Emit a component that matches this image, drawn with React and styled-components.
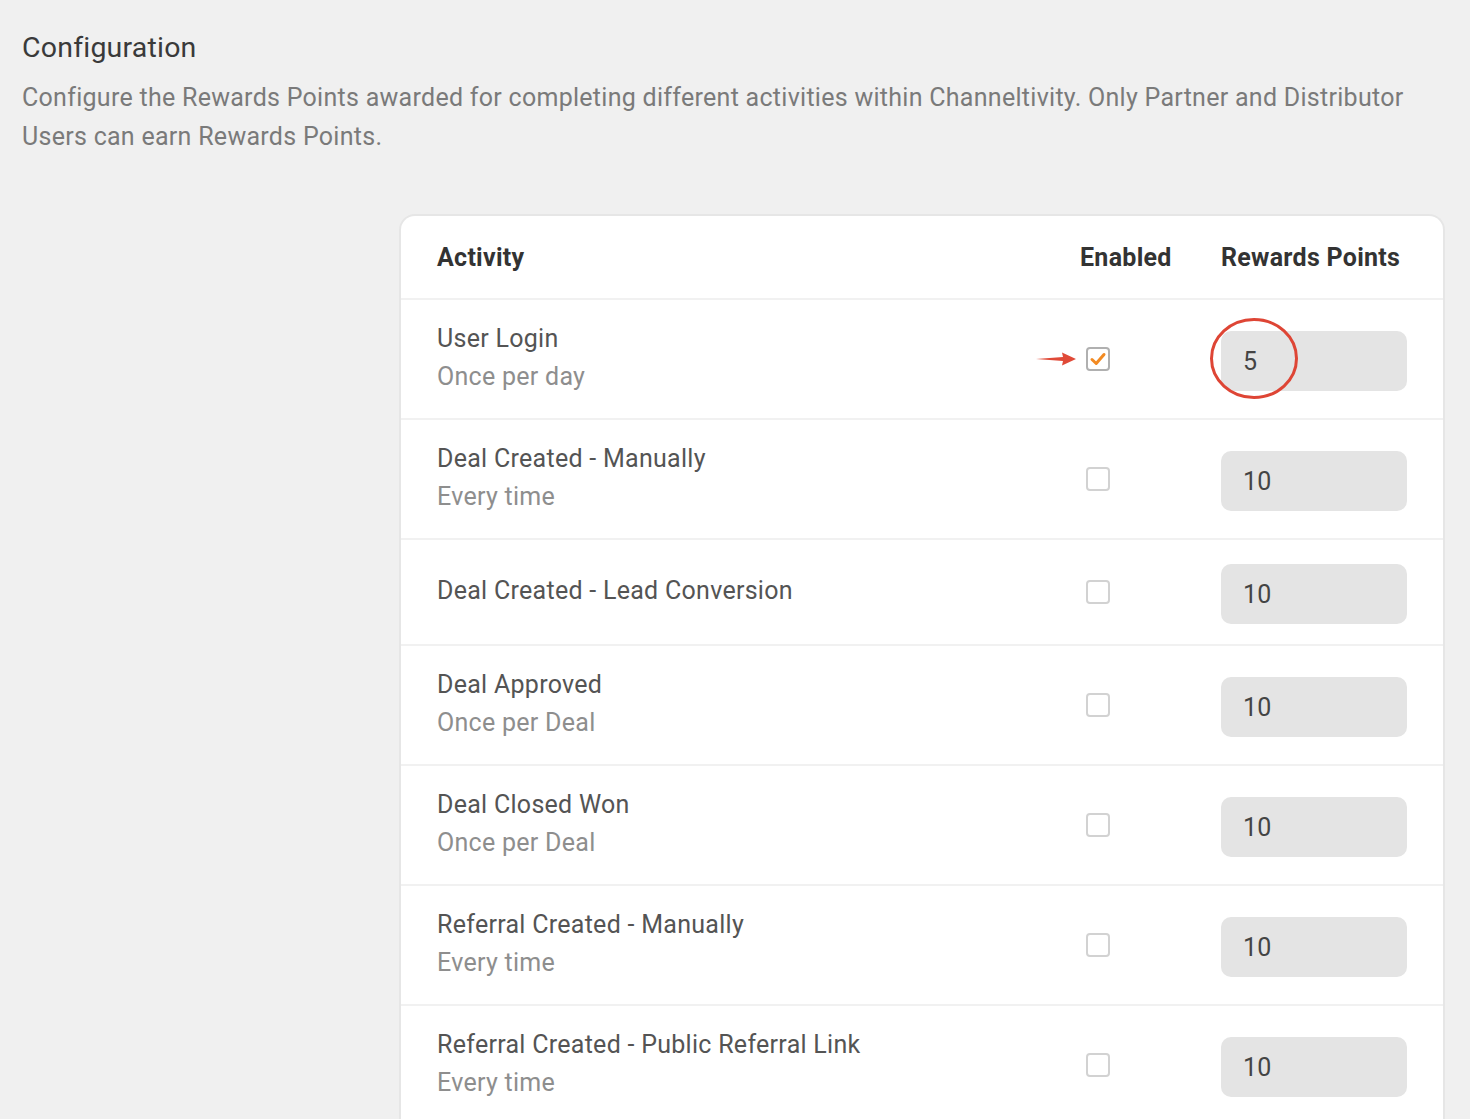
import React from 'react';
import styled, { createGlobalStyle } from 'styled-components';

const GlobalStyle = createGlobalStyle`
  html, body {
    margin: 0;
    padding: 0;
    background: #f0f0f0;
    font-family: Roboto, "Liberation Sans", sans-serif;
  }
  * { box-sizing: border-box; }
`

const Page = styled.div`
  padding: 28px 22px 0 22px;
  min-height: 1119px;
  overflow: hidden;
  letter-spacing: 0.28px;
`

const Title = styled.h1`
  margin: 0;
  font-size: 28.5px;
  font-weight: 400;
  line-height: 40px;
  color: #3a3a3a;
  letter-spacing: 0.2px;
`

const Description = styled.p`
  margin: 11px 0 0 0;
  font-size: 25px;
  line-height: 38.5px;
  color: #7a7a7a;
  max-width: 1410px;
`

const Layout = styled.div`
  display: grid;
  grid-template-columns: 377px 1fr;
  margin-top: 58px;
  margin-right: 3px;
`

const Card = styled.div`
  grid-column: 2;
  background: #ffffff;
  border: 2px solid #e6e6e6;
  border-bottom: none;
  border-radius: 16px 16px 0 0;
`

const Row = styled.div`
  display: grid;
  grid-template-columns: 1fr 91px 186px;
  column-gap: 50px;
  align-items: center;
  padding: ${p => (p.$head ? '0 36px' : '21px 36px 21px 36px')};
  min-height: ${p => (p.$head ? '84px' : '106px')};
  border-bottom: 2px solid #f1f1f1;
`

const HeadCell = styled.div`
  font-size: 25px;
  font-weight: 700;
  color: #333;
  line-height: 38px;
  white-space: nowrap;
  padding-top: 2px;
`

const Activity = styled.div`
  position: relative;
  top: -1px;
  font-size: 25px;
  line-height: 38px;
`

const Name = styled.div`
  color: #545454;
`

const Frequency = styled.div`
  color: #8e8e8e;
`

const EnabledCell = styled.div`
  position: relative;
  display: flex;
  align-items: center;
  padding-left: 6px;
`

const Box = styled.span`
  width: 24px;
  height: 24px;
  border: 2px solid ${p => (p.$checked ? '#b0b0b0' : '#d2d2d2')};
  border-radius: 4px;
  display: flex;
  align-items: center;
  justify-content: center;
  background: #fff;
`

const Arrow = styled.svg`
  position: absolute;
  left: -44px;
  top: 50%;
  margin-top: -8px;
`

const PointsCell = styled.div`
  position: relative;
  top: 2px;
`

const PointsInput = styled.div`
  height: 60px;
  border-radius: 10px;
  background: #e4e4e4;
  display: flex;
  align-items: center;
  padding-left: 22px;
  font-size: 25px;
  color: #444;
`

const Circle = styled.svg`
  position: absolute;
  left: -11px;
  top: -13px;
  pointer-events: none;
`

const activities = [
  { name: 'User Login', freq: 'Once per day', checked: true, points: 5, mark: true },
  { name: 'Deal Created - Manually', freq: 'Every time', points: 10 },
  { name: 'Deal Created - Lead Conversion', points: 10 },
  { name: 'Deal Approved', freq: 'Once per Deal', points: 10 },
  { name: 'Deal Closed Won', freq: 'Once per Deal', points: 10 },
  { name: 'Referral Created - Manually', freq: 'Every time', points: 10 },
  { name: 'Referral Created - Public Referral Link', freq: 'Every time', points: 10 },
]

const Check = () => (
  <svg width="18" height="18" viewBox="0 0 18 18">
    <path d="M3 9.5 L7.2 13.5 L15 4.5" fill="none" stroke="#f28a22" strokeWidth="3" strokeLinecap="round" strokeLinejoin="round" />
  </svg>
)

const App = () => {
  return (
    <Page>
      <GlobalStyle />
      <Title>Configuration</Title>
      <Description>
        Configure the Rewards Points awarded for completing different activities within Channeltivity. Only Partner and Distributor Users can earn Rewards Points.
      </Description>
      <Layout>
        <Card>
          <Row $head>
            <HeadCell>Activity</HeadCell>
            <HeadCell>Enabled</HeadCell>
            <HeadCell>Rewards Points</HeadCell>
          </Row>
          {activities.map(a => (
            <Row key={a.name}>
              <Activity>
                <Name>{a.name}</Name>
                {a.freq && <Frequency>{a.freq}</Frequency>}
              </Activity>
              <EnabledCell>
                {a.mark && (
                  <Arrow width="40" height="16" viewBox="0 0 40 16">
                    <path d="M0 8 L27 6 L26 1.5 L40 8 L26 14.5 L27 10 Z" fill="#e04a38" />
                  </Arrow>
                )}
                <Box $checked={a.checked}>{a.checked && <Check />}</Box>
              </EnabledCell>
              <PointsCell>
                <PointsInput>{a.points}</PointsInput>
                {a.mark && (
                  <Circle width="88" height="81" viewBox="0 0 88 81">
                    <ellipse cx="44" cy="40.5" rx="42.5" ry="39" fill="none" stroke="#de4535" strokeWidth="3" />
                  </Circle>
                )}
              </PointsCell>
            </Row>
          ))}
        </Card>
      </Layout>
    </Page>
  )
}

export default App
